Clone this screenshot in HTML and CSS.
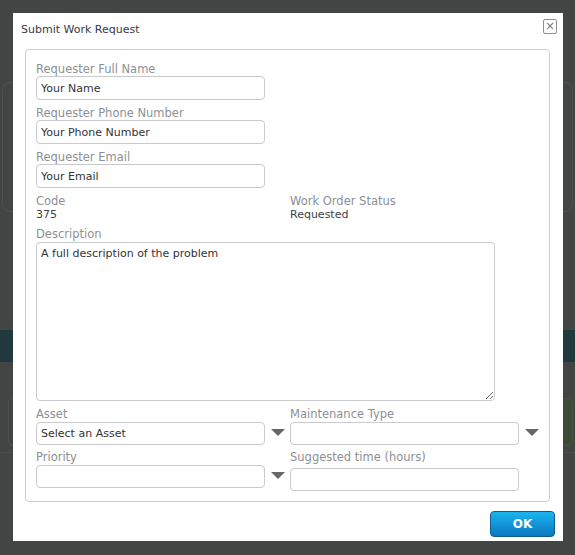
FILE: index.html
```html
<!DOCTYPE html>
<html lang="en">
<head>
    <meta charset="UTF-8">
    <meta name="viewport" content="width=device-width, initial-scale=1.0">
    <title>Submit Work Request</title>
    <link rel="stylesheet" href="styles.css">
</head>
<body>

    <!-- halaman di belakang dialog -->
    <div class="page">
        <div class="page-card"></div>
        <div class="page-band"></div>
        <div class="page-actions">
            <div class="page-btn"></div>
            <div class="page-btn green"></div>
        </div>
        <div class="page-line"></div>
    </div>

    <div class="modal">
        <div class="modal-header">
            <span class="modal-title">Submit Work Request</span>
            <button class="close-btn" title="Close">&times;</button>
        </div>

        <div class="fieldset">
            <div class="field">
                <label>Requester Full Name</label>
                <input type="text" class="text-input" value="Your Name">
            </div>
            <div class="field">
                <label>Requester Phone Number</label>
                <input type="text" class="text-input" value="Your Phone Number">
            </div>
            <div class="field">
                <label>Requester Email</label>
                <input type="text" class="text-input" value="Your Email">
            </div>

            <div class="two-col">
                <div class="field">
                    <label>Code</label>
                    <div class="value">375</div>
                </div>
                <div class="field">
                    <label>Work Order Status</label>
                    <div class="value">Requested</div>
                </div>
            </div>

            <div class="field">
                <label>Description</label>
                <textarea class="desc">A full description of the problem</textarea>
            </div>

            <div class="two-col combos">
                <div class="field">
                    <label>Asset</label>
                    <div class="combo">
                        <div class="combo-box">Select an Asset</div>
                        <span class="arrow"></span>
                    </div>
                </div>
                <div class="field">
                    <label>Maintenance Type</label>
                    <div class="combo">
                        <div class="combo-box"></div>
                        <span class="arrow"></span>
                    </div>
                </div>
            </div>

            <div class="two-col last">
                <div class="field">
                    <label>Priority</label>
                    <div class="combo">
                        <div class="combo-box"></div>
                        <span class="arrow"></span>
                    </div>
                </div>
                <div class="field">
                    <label>Suggested time (hours)</label>
                    <input type="text" class="text-input hours" value="">
                </div>
            </div>
        </div>

        <div class="modal-footer">
            <button class="ok-btn">OK</button>
        </div>
    </div>

</body>
</html>
```

FILE: styles.css
```css
body {
    margin: 0;
    padding: 0;
    background-color: #434545;
    font-family: 'DejaVu Sans', Verdana, sans-serif;
    height: 555px;
    overflow: hidden;
}

/* Halaman belakang */
.page {
    padding-top: 82px;
}

.page-card {
    margin: 0 2px;
    height: 128px;
    border: 1px solid #505252;
    border-radius: 8px;
}

.page-band {
    margin-top: 118px;
    height: 32px;
    background-color: #20393f;
}

.page-actions {
    display: flex;
    justify-content: space-between;
    margin-top: 36px;
    padding: 0 2px 0 8px;
}

.page-btn {
    width: 60px;
    height: 46px;
    border: 1px solid #505252;
    border-radius: 5px;
}

.page-btn.green {
    background-color: #3c4a36;
    border-color: #465540;
}

.page-line {
    margin-top: 6px;
    border-top: 1px solid #4d5050;
}

/* Dialog */
.modal {
    position: absolute;
    left: 13px;
    top: 13px;
    width: 550px;
    height: 528px;
    background-color: #ffffff;
    box-sizing: border-box;
}

.modal-header {
    display: flex;
    align-items: flex-start;
    justify-content: space-between;
    height: 36px;
    padding: 6px 6px 0 8px;
    box-sizing: border-box;
}

.modal-title {
    font-size: 11px;
    line-height: 14px;
    color: #363b44;
    margin-top: 4px;
}

.close-btn {
    width: 14px;
    height: 15px;
    padding: 0;
    border: 1px solid #8e8e8e;
    border-radius: 2px;
    background-color: #ffffff;
    color: #7a7a7a;
    font-size: 12px;
    line-height: 11px;
    font-family: 'DejaVu Sans', sans-serif;
    cursor: pointer;
}

.fieldset {
    margin: 0 13px 0 12px;
    border: 1px solid #cfcfd3;
    border-radius: 4px;
    padding: 13px 10px 10px 10px;
}

.field {
    margin-bottom: 7px;
}

.field label {
    display: block;
    font-size: 11.5px;
    line-height: 13px;
    color: #8d9096;
}

.text-input, .combo-box {
    display: block;
    width: 229px;
    height: 24px;
    box-sizing: border-box;
    border: 1px solid #c9c9ce;
    border-radius: 4px;
    padding: 0 4px;
    font-family: 'DejaVu Sans', Verdana, sans-serif;
    font-size: 11px;
    line-height: 22px;
    color: #333333;
    background-color: #ffffff;
    outline: none;
}

.combo-box {
    height: 23px;
    line-height: 21px;
    margin-top: 1px;
}

.value {
    font-size: 11px;
    line-height: 13px;
    color: #3a3f48;
}

.two-col {
    display: grid;
    grid-template-columns: 254px 1fr;
    margin-bottom: 7px;
}

.two-col .field {
    margin-bottom: 0;
}

.two-col.combos {
    margin-bottom: 6px;
}

.two-col.last {
    margin-bottom: 0;
}

.desc {
    display: block;
    width: 459px;
    height: 159px;
    margin-top: 1px;
    box-sizing: border-box;
    border: 1px solid #c9c9ce;
    border-radius: 4px;
    padding: 4px;
    font-family: 'DejaVu Sans', Verdana, sans-serif;
    font-size: 11px;
    line-height: 14px;
    color: #333333;
    outline: none;
}

.combo {
    display: flex;
    align-items: center;
    gap: 6px;
}

.arrow {
    width: 0;
    height: 0;
    border-left: 7.5px solid transparent;
    border-right: 7.5px solid transparent;
    border-top: 7px solid #666666;
    margin-top: -2px;
}

.hours {
    height: 23px;
    margin-top: 4px;
}

.modal-footer {
    display: flex;
    justify-content: flex-end;
    padding: 9px 8px 0 0;
}

.ok-btn {
    width: 65px;
    height: 26px;
    border: 1px solid #0c5d94;
    border-radius: 4px;
    background: linear-gradient(to bottom, #1bb4ee, #0a78c0);
    color: #ffffff;
    font-family: 'DejaVu Sans', Verdana, sans-serif;
    font-size: 12px;
    font-weight: bold;
    cursor: pointer;
}
```
